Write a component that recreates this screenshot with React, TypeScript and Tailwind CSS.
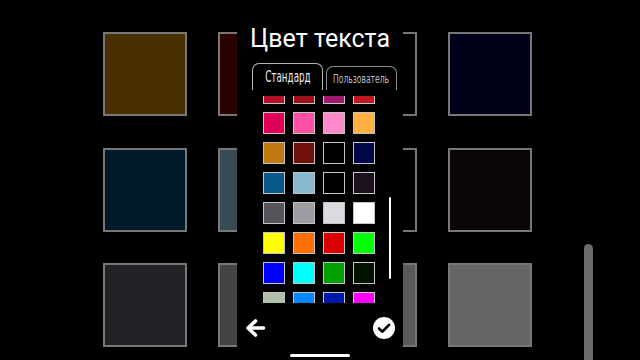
import React from 'react';

const backdrop = [
  'bg-[#4a3000]', 'bg-[#2a0202]', 'bg-[#000000]', 'bg-[#00001a]',
  'bg-[#001a2a]', 'bg-[#384a55]', 'bg-[#000000]', 'bg-[#0a0508]',
  'bg-[#222125]', 'bg-[#444446]', 'bg-[#5a5a5a]', 'bg-[#666666]',
];

const swatches = [
  '#b3102a', '#a0101a', '#a01870', '#c01820',
  '#e0005a', '#ff50a8', '#ff88c8', '#ffb040',
  '#c07810', '#701008', '#000000', '#000848',
  '#0a5888', '#88b8d0', '#000000', '#1e1020',
  '#58545c', '#9e9ca2', '#dcdae0', '#ffffff',
  '#ffff00', '#ff7000', '#d80000', '#00ff00',
  '#0000ff', '#00ffff', '#00a000', '#001400',
  '#b0c0a8', '#0088ff', '#0018a8', '#ff00ff',
];

function BackArrow() {
  return (
    <svg width="21" height="20" viewBox="0 0 21 20" fill="none">
      <path d="M18.5 10H4" stroke="white" strokeWidth="3.6" strokeLinecap="round" />
      <path d="M10.5 3L3 10l7.5 7" stroke="white" strokeWidth="3.6" strokeLinecap="round" strokeLinejoin="round" />
    </svg>
  );
}

function CheckCircle() {
  return (
    <svg width="22" height="22" viewBox="0 0 22 22">
      <circle cx="11" cy="11" r="11" fill="white" />
      <path d="M6 11.5l3.2 3.2L16.2 7.8" stroke="black" strokeWidth="2.6" fill="none" strokeLinecap="round" strokeLinejoin="round" />
    </svg>
  );
}

export default function App() {
  return (
    <div className="relative w-[640px] h-[360px] overflow-hidden bg-black">
      {/* dimmed palette behind the dialog */}
      <div className="grid grid-cols-[repeat(4,84px)] gap-x-[31px] gap-y-[31.5px] pl-[103px] pt-[32px]">
        {backdrop.map((c, i) => (
          <div key={i} className={`h-[84px] border-2 border-[#777777] ${c}`} />
        ))}
      </div>

      {/* dialog */}
      <div className="absolute left-[237px] top-0 w-[166px] h-[360px] bg-black flex flex-col">
        <div className="pt-[24px] text-center text-white text-[25px] leading-[30px] font-['Roboto',sans-serif]">
          Цвет текста
        </div>

        <div className="mt-[9px] h-[27px] flex gap-[3px] pl-[15px] font-['DejaVu_Sans_Condensed','DejaVu_Sans',sans-serif]">
          <div className="w-[71px] h-[27px] rounded-t-[7px] border border-b-0 border-[#b4b4b4] flex items-center justify-center overflow-hidden">
            <span className="inline-block text-[15px] text-[#ececec] scale-x-[0.65] whitespace-nowrap">Стандард</span>
          </div>
          <div className="mt-[3px] w-[71px] h-[24px] rounded-t-[7px] border border-b-0 border-[#8a8a8a] flex items-center justify-center overflow-hidden">
            <span className="inline-block text-[13px] text-[#bdbdbd] scale-x-[0.65] whitespace-nowrap">Пользователь</span>
          </div>
        </div>

        <div className="relative mt-[6px] h-[207px] overflow-hidden">
          <div className="-mt-[14px] pl-[26px] grid grid-cols-[repeat(4,22px)] gap-[8px]">
            {swatches.map((c, i) => (
              <div key={i} className="h-[22px] border border-[#c4c4c4]" style={{ backgroundColor: c }} />
            ))}
          </div>
          <div className="absolute left-[152px] top-[101px] w-[2px] h-[82px] rounded-full bg-white" />
        </div>

        <div className="mt-[14px] h-[22px] px-[8px] flex items-center justify-between">
          <BackArrow />
          <CheckCircle />
        </div>
      </div>

      {/* page scrollbar */}
      <div className="absolute left-[584px] top-[244px] w-[9px] h-[130px] rounded-t-full bg-[#6b6b6b]" />

      {/* home indicator */}
      <div className="absolute left-[290px] top-[354px] w-[60px] h-[3px] rounded-full bg-white" />
    </div>
  );
}
